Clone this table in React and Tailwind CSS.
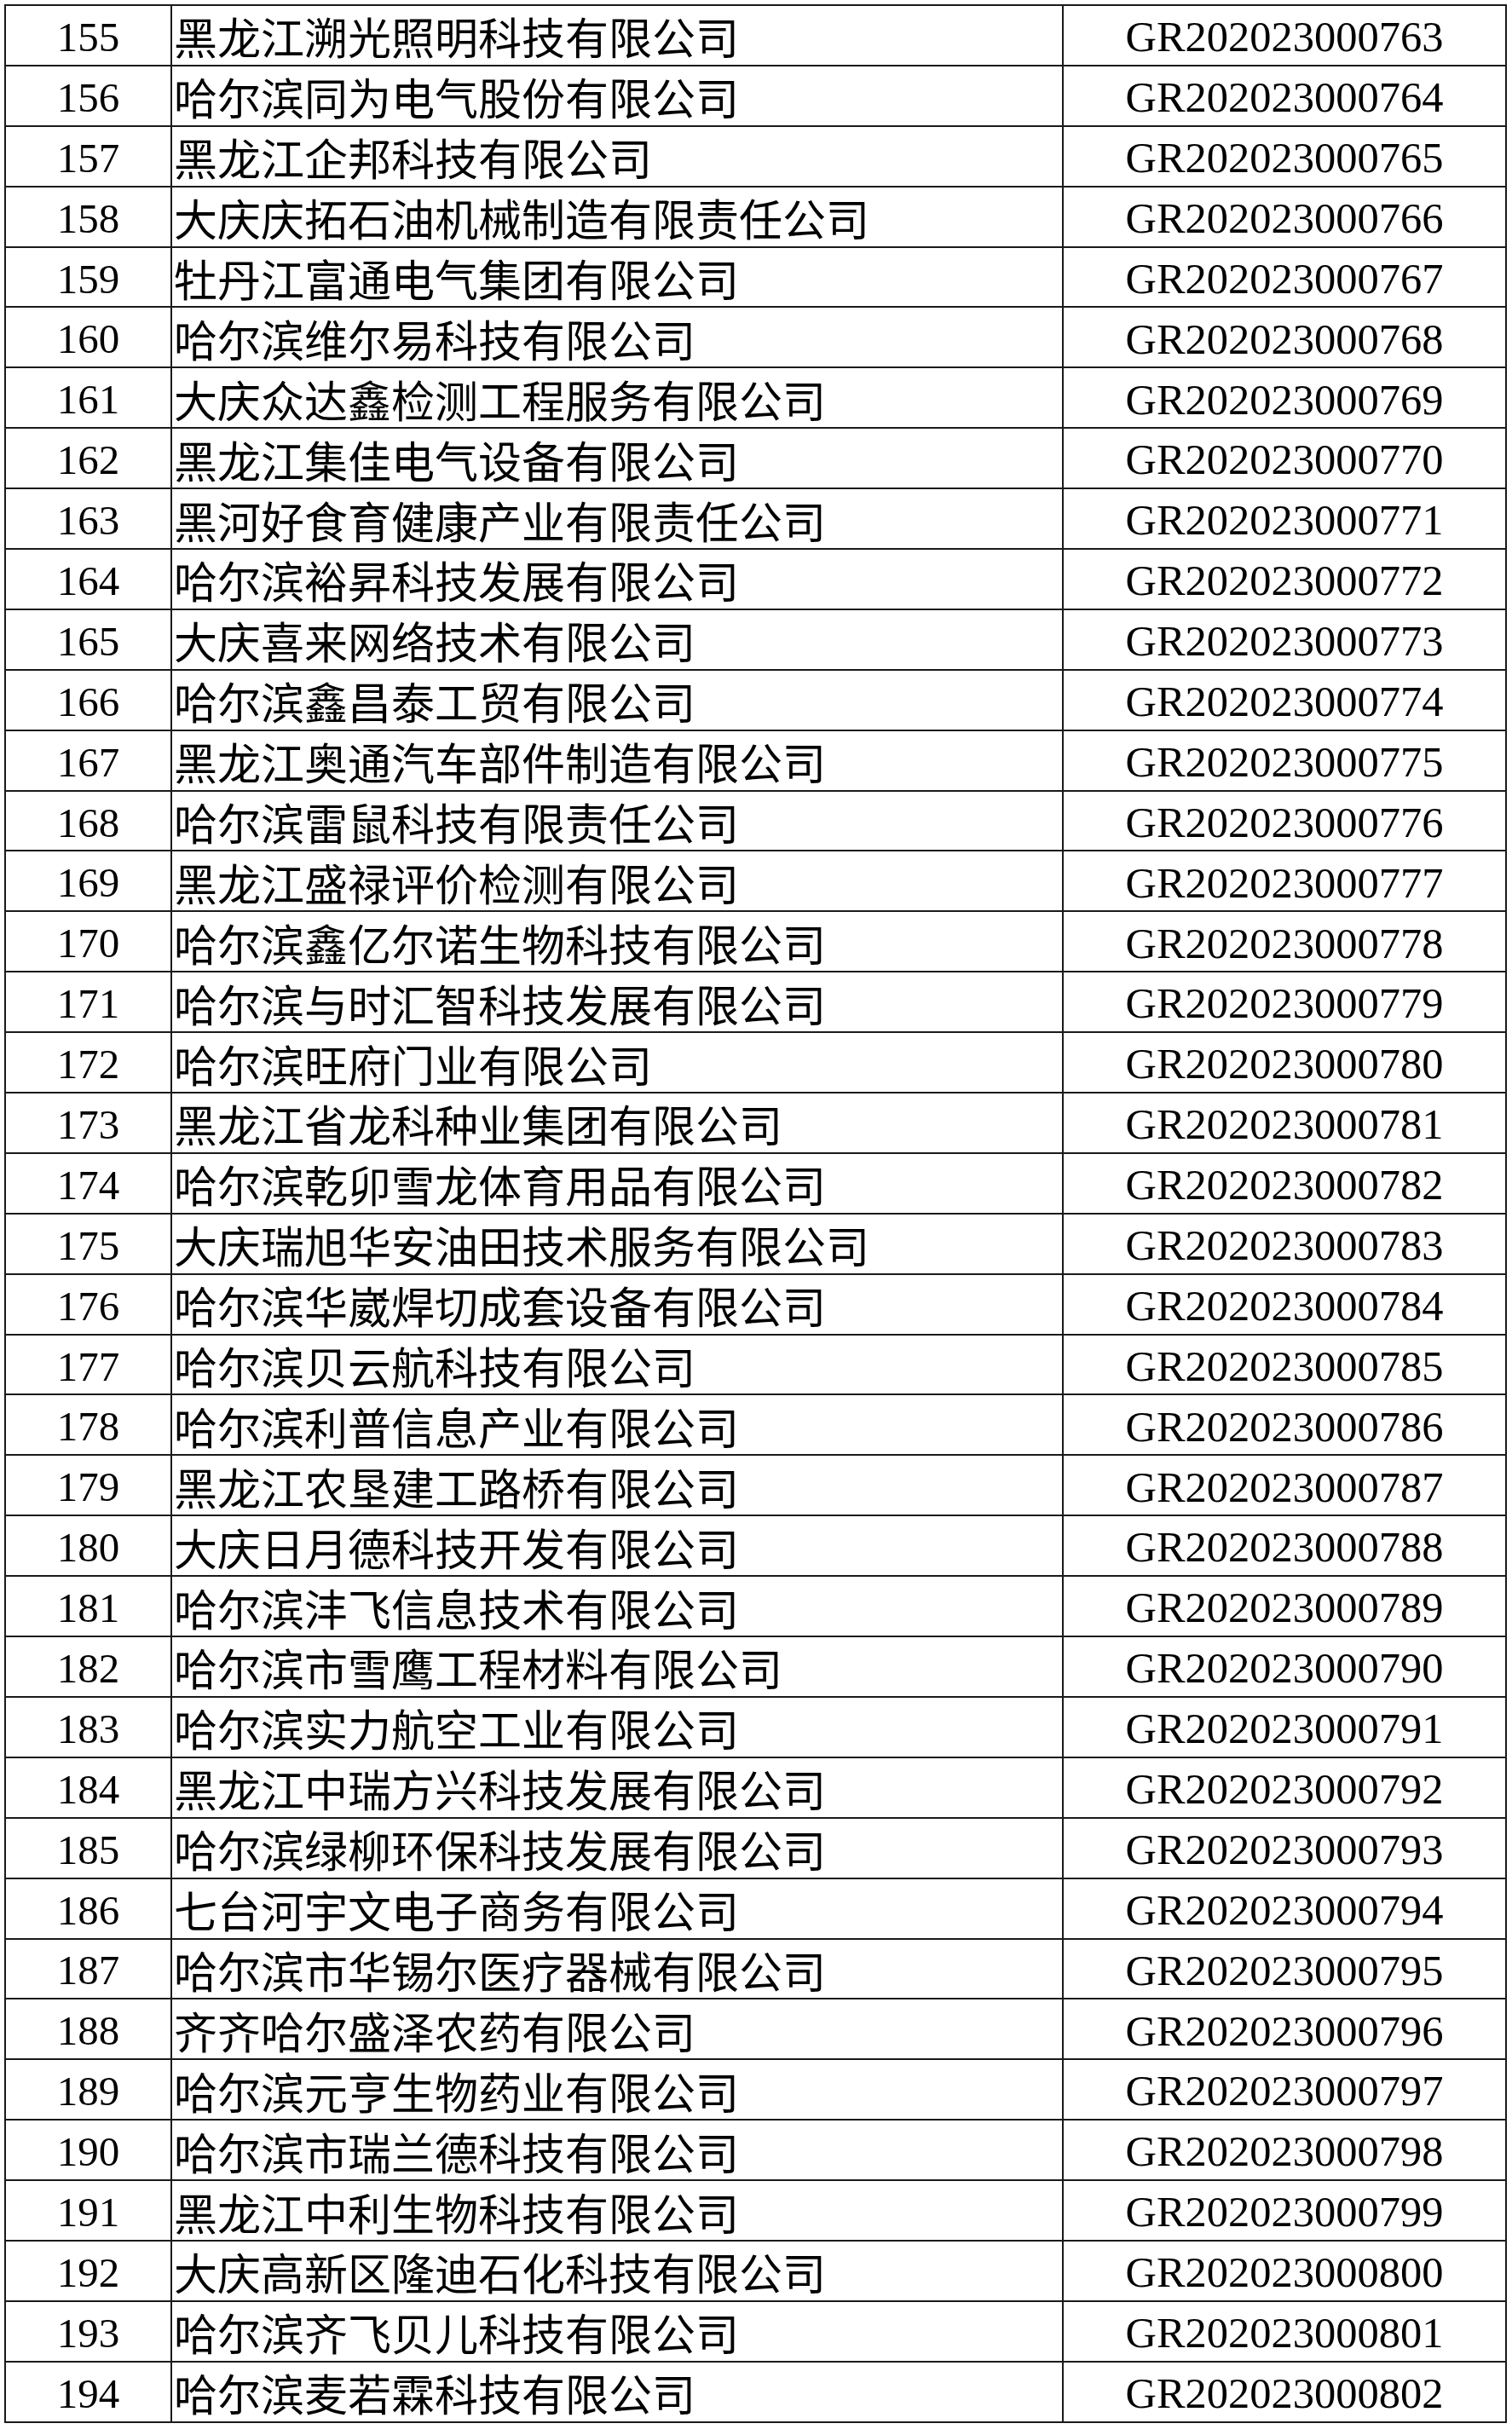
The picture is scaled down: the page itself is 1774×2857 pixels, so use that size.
const names = [
  "黑龙江溯光照明科技有限公司",
  "哈尔滨同为电气股份有限公司",
  "黑龙江企邦科技有限公司",
  "大庆庆拓石油机械制造有限责任公司",
  "牡丹江富通电气集团有限公司",
  "哈尔滨维尔易科技有限公司",
  "大庆众达鑫检测工程服务有限公司",
  "黑龙江集佳电气设备有限公司",
  "黑河好食育健康产业有限责任公司",
  "哈尔滨裕昇科技发展有限公司",
  "大庆喜来网络技术有限公司",
  "哈尔滨鑫昌泰工贸有限公司",
  "黑龙江奥通汽车部件制造有限公司",
  "哈尔滨雷鼠科技有限责任公司",
  "黑龙江盛禄评价检测有限公司",
  "哈尔滨鑫亿尔诺生物科技有限公司",
  "哈尔滨与时汇智科技发展有限公司",
  "哈尔滨旺府门业有限公司",
  "黑龙江省龙科种业集团有限公司",
  "哈尔滨乾卯雪龙体育用品有限公司",
  "大庆瑞旭华安油田技术服务有限公司",
  "哈尔滨华崴焊切成套设备有限公司",
  "哈尔滨贝云航科技有限公司",
  "哈尔滨利普信息产业有限公司",
  "黑龙江农垦建工路桥有限公司",
  "大庆日月德科技开发有限公司",
  "哈尔滨沣飞信息技术有限公司",
  "哈尔滨市雪鹰工程材料有限公司",
  "哈尔滨实力航空工业有限公司",
  "黑龙江中瑞方兴科技发展有限公司",
  "哈尔滨绿柳环保科技发展有限公司",
  "七台河宇文电子商务有限公司",
  "哈尔滨市华锡尔医疗器械有限公司",
  "齐齐哈尔盛泽农药有限公司",
  "哈尔滨元亨生物药业有限公司",
  "哈尔滨市瑞兰德科技有限公司",
  "黑龙江中利生物科技有限公司",
  "大庆高新区隆迪石化科技有限公司",
  "哈尔滨齐飞贝儿科技有限公司",
  "哈尔滨麦若霖科技有限公司",
];

const rows = names.map((name, i) => ({
  no: 155 + i,
  name,
  code: "GR202023000" + (763 + i),
}));

const App = () => {
  return (
    <div className="w-[1774px] min-h-[2857px] bg-white pt-[5px] pl-[5px] text-black font-['Liberation_Serif','Noto_Sans_CJK_SC',serif]">
      <div className="w-[1763px] border-l-2 border-t-2 border-[#1a1a1a]">
        {rows.map((r) => (
          <div key={r.no} className="grid grid-cols-[195px_1046px_520px] h-[70.9px]">
            <div className="flex items-center justify-center border-r-2 border-b-2 border-[#1a1a1a] text-[49px] leading-none pt-[4px]">
              {r.no}
            </div>
            <div className="flex items-center border-r-2 border-b-2 border-[#1a1a1a] text-[51px] leading-none pl-[2px] pt-[3px] font-['Noto_Sans_CJK_SC',sans-serif] whitespace-nowrap">
              {r.name}
            </div>
            <div className="flex items-center justify-center border-r-2 border-b-2 border-[#1a1a1a] text-[50.5px] leading-none pt-[4px]">
              {r.code}
            </div>
          </div>
        ))}
      </div>
    </div>
  );
};

export default App;
